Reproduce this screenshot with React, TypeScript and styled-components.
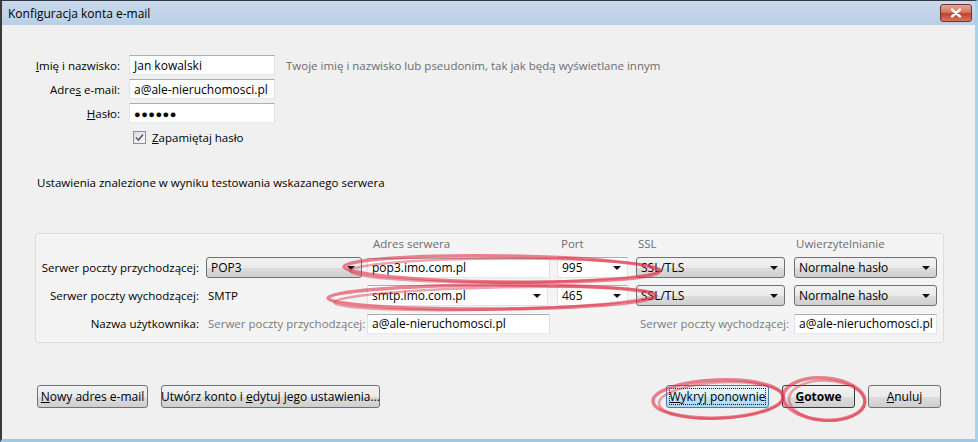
import React from 'react';
import styled, { createGlobalStyle, css } from 'styled-components';

const Global = createGlobalStyle`
  html, body {
    margin: 0;
    padding: 0;
    background: #f0f0f0;
  }
  body {
    font-family: "Open Sans", "Noto Sans", sans-serif;
    font-size: 11.5px;
    color: #000;
  }
`;

const Window = styled.div`
  position: relative;
  width: 978px;
  height: 442px;
  box-sizing: border-box;
  border-top: 1px solid #2f3a46;
  border-left: 2px solid #3a3a3a;
  border-right: 3px solid #a6d3ec;
  border-bottom: 3px solid #9ccbe7;
  background: #f0f0f0;
  display: flex;
  flex-direction: column;
  overflow: hidden;
`;

const TitleBar = styled.div`
  height: 24px;
  flex: none;
  display: flex;
  align-items: center;
  justify-content: space-between;
  padding: 0 3px 0 6px;
  background: linear-gradient(#cad9ec, #b9cfe7);
  font-size: 12px;
`;

const CloseButton = styled.div`
  width: 30px;
  height: 16px;
  border: 1px solid #6b3430;
  border-radius: 3px;
  background: linear-gradient(#e7a595 0%, #d77662 45%, #c2422c 55%, #d9735d 100%);
  display: flex;
  align-items: center;
  justify-content: center;
`;

const Body = styled.div`
  flex: 1;
  display: flex;
  flex-direction: column;
  padding-top: 30px;
`;

const Form = styled.div`
  display: grid;
  grid-template-columns: 118px 146px auto;
  column-gap: 9px;
  row-gap: 4px;
  align-items: center;
`;

const Label = styled.label`
  text-align: right;
  white-space: nowrap;
`;

const inputLook = css`
  box-sizing: border-box;
  height: 20px;
  background: #fff;
  border: 1px solid #e2e3ea;
  border-top-color: #abadb3;
  border-bottom-color: #e3e9ef;
  padding: 0 4px;
  display: flex;
  align-items: center;
  white-space: nowrap;
  overflow: hidden;
  font-size: 12px;
`;

const TextBox = styled.div<{ $w?: number }>`
  ${inputLook};
  width: ${(p) => (p.$w ? `${p.$w}px` : '100%')};
  justify-self: end;
`;

const Dots = styled.span`
  font-size: 11px;
  letter-spacing: 0.5px;
`;

const Hint = styled.span`
  color: #6d6d6d;
  margin-left: 2px;
  white-space: nowrap;
`;

const CheckRow = styled.div`
  grid-column: 2 / 4;
  display: flex;
  align-items: center;
  gap: 6px;
  padding-left: 4px;
  margin-top: 3px;
`;

const CheckBox = styled.span`
  width: 13px;
  height: 13px;
  box-sizing: border-box;
  border: 1px solid #8f8f8f;
  background: linear-gradient(135deg, #dcdcdc, #fbfbfb);
  display: flex;
  align-items: center;
  justify-content: center;
`;

const Note = styled.div`
  margin: 30px 0 0 35px;
  line-height: 16px;
`;

/* tracks include the gap in front of each control; controls sit at the end */
const Panel = styled.div`
  margin: 42px 0 0 33px;
  width: 909px;
  height: 110px;
  box-sizing: border-box;
  border: 1px solid #dcdcdc;
  border-radius: 3px;
  background: #f4f4f4;
  padding-top: 2px;
  display: grid;
  grid-template-columns: 170px 156px 188px 78px 157px 152px;
  grid-template-rows: 14px 21px 21px 21px;
  row-gap: 7px;
  align-items: center;
`;

const Head = styled.span<{ $col: number; $pad: number }>`
  grid-column: ${(p) => p.$col};
  color: #6d6d6d;
  padding-left: ${(p) => p.$pad}px;
  white-space: nowrap;
`;

const RowLabel = styled.span`
  grid-column: 1;
  text-align: right;
  padding-right: 7px;
  white-space: nowrap;
`;

const Muted = styled.span<{ $right?: boolean }>`
  color: #7a7a7a;
  white-space: nowrap;
  text-align: ${(p) => (p.$right ? 'right' : 'left')};
  padding-left: ${(p) => (p.$right ? 0 : 2)}px;
  margin-right: ${(p) => (p.$right ? -4 : 0)}px;
`;

const PlainValue = styled.span`
  padding-left: 2px;
`;

const ComboButton = styled.div<{ $w: number; $flat?: boolean }>`
  box-sizing: border-box;
  width: ${(p) => p.$w}px;
  justify-self: end;
  height: 21px;
  display: flex;
  align-items: center;
  justify-content: space-between;
  padding: 0 6px 0 4px;
  font-size: 12px;
  white-space: nowrap;
  ${(p) =>
    p.$flat
      ? css`
          background: #fff;
          border: 1px solid #e2e3ea;
          border-top-color: #abadb3;
        `
      : css`
          border: 1px solid #707070;
          border-radius: 3px;
          background: linear-gradient(#f2f2f2 0%, #ebebeb 50%, #dddddd 51%, #cfcfcf 100%);
        `}
`;

const Arrow = styled.span`
  width: 0;
  height: 0;
  border-left: 4px solid transparent;
  border-right: 4px solid transparent;
  border-top: 4px solid #111;
`;

const Footer = styled.div`
  margin-top: 42px;
  padding: 0 34px 0 35px;
  display: flex;
  justify-content: space-between;
`;

const ButtonGroup = styled.div<{ $gap: number }>`
  display: flex;
  gap: ${(p) => p.$gap}px;
`;

const Button = styled.div<{ $w: number; $kind?: 'focus' | 'default' }>`
  box-sizing: border-box;
  width: ${(p) => p.$w}px;
  height: 23px;
  border: 1px solid #707070;
  border-radius: 3px;
  background: linear-gradient(#f2f2f2 0%, #ebebeb 50%, #dddddd 51%, #cfcfcf 100%);
  display: flex;
  align-items: center;
  justify-content: center;
  white-space: pre;
  font-size: 12px;
  ${(p) =>
    p.$kind === 'focus' &&
    css`
      border-color: #3c7fb1;
      background: linear-gradient(#eaf6fd 0%, #d9f0fc 50%, #bee6fd 51%, #a7d9f5 100%);
      outline: 1px dotted #222;
      outline-offset: -4px;
    `}
  ${(p) =>
    p.$kind === 'default' &&
    css`
      font-weight: 700;
      border-color: #3a3a3a;
    `}
`;

const Marks = styled.svg`
  position: absolute;
  inset: 0;
  pointer-events: none;
`;

const Ring: React.FC<{ cx: number; cy: number; rx: number; ry: number; r?: number }> = ({ cx, cy, rx, ry, r = 0 }) => (
  <g fill="none" stroke="#dd3148" strokeLinecap="round">
    <ellipse cx={cx} cy={cy} rx={rx} ry={ry} transform={`rotate(${r} ${cx} ${cy})`} strokeWidth={3.5} opacity={0.6} />
    <ellipse cx={cx + 3} cy={cy + 1.5} rx={rx - 3} ry={ry - 1} transform={`rotate(${r - 1} ${cx} ${cy})`} strokeWidth={2.5} opacity={0.45} />
  </g>
);

export default function App() {
  return (
    <>
      <Global />
      <Window>
        <TitleBar>
          <span>Konfiguracja konta e-mail</span>
          <CloseButton>
            <svg width="12" height="10" viewBox="0 0 12 10">
              <path d="M2 1.5 L10 8.5 M10 1.5 L2 8.5" stroke="#fff" strokeWidth="2.4" strokeLinecap="round" />
            </svg>
          </CloseButton>
        </TitleBar>
        <Body>
          <Form>
            <Label>
              <u>I</u>mię i nazwisko:
            </Label>
            <TextBox>Jan kowalski</TextBox>
            <Hint>Twoje imię i nazwisko lub pseudonim, tak jak będą wyświetlane innym</Hint>
            <Label>
              Adre<u>s</u> e-mail:
            </Label>
            <TextBox>a@ale-nieruchomosci.pl</TextBox>
            <span />
            <Label>
              <u>H</u>asło:
            </Label>
            <TextBox>
              <Dots>●●●●●●</Dots>
            </TextBox>
            <span />
            <span />
            <CheckRow>
              <CheckBox>
                <svg width="9" height="9" viewBox="0 0 9 9">
                  <path d="M1 4.5 L3.5 7 L8 1.5" fill="none" stroke="#4a5f7a" strokeWidth="1.6" />
                </svg>
              </CheckBox>
              <span>
                <u>Z</u>apamiętaj hasło
              </span>
            </CheckRow>
          </Form>

          <Note>Ustawienia znalezione w wyniku testowania wskazanego serwera</Note>

          <Panel>
            <span />
            <span />
            <Head $col={3} $pad={11}>Adres serwera</Head>
            <Head $col={4} $pad={11}>Port</Head>
            <Head $col={5} $pad={10}>SSL</Head>
            <Head $col={6} $pad={11}>Uwierzytelnianie</Head>

            <RowLabel>Serwer poczty przychodzącej:</RowLabel>
            <ComboButton $w={156}>
              POP3 <Arrow />
            </ComboButton>
            <TextBox $w={183}>pop3.imo.com.pl</TextBox>
            <ComboButton $w={71} $flat>
              995 <Arrow />
            </ComboButton>
            <ComboButton $w={149}>
              SSL/TLS <Arrow />
            </ComboButton>
            <ComboButton $w={143}>
              Normalne hasło <Arrow />
            </ComboButton>

            <RowLabel>Serwer poczty wychodzącej:</RowLabel>
            <PlainValue>SMTP</PlainValue>
            <ComboButton $w={181} style={{ justifySelf: 'start', marginLeft: 5 }} $flat>
              smtp.imo.com.pl <Arrow />
            </ComboButton>
            <ComboButton $w={71} $flat>
              465 <Arrow />
            </ComboButton>
            <ComboButton $w={149}>
              SSL/TLS <Arrow />
            </ComboButton>
            <ComboButton $w={143}>
              Normalne hasło <Arrow />
            </ComboButton>

            <RowLabel>Nazwa użytkownika:</RowLabel>
            <Muted>Serwer poczty przychodzącej:</Muted>
            <TextBox $w={183}>a@ale-nieruchomosci.pl</TextBox>
            <Muted $right style={{ gridColumn: '4 / 6' }}>
              Serwer poczty wychodzącej:
            </Muted>
            <TextBox $w={143}>a@ale-nieruchomosci.pl</TextBox>
          </Panel>

          <Footer>
            <ButtonGroup $gap={13}>
              <Button $w={111}>
                <u>N</u>owy adres e-mail
              </Button>
              <Button $w={219}>
                {'Utwórz konto i '}
                <u>e</u>
                {'dytuj jego ustawienia...'}
              </Button>
            </ButtonGroup>
            <ButtonGroup $gap={13}>
              <Button $w={103} $kind="focus">
                <u>W</u>ykryj ponownie
              </Button>
              <Button $w={73} $kind="default">
                <u>G</u>otowe
              </Button>
              <Button $w={73}>
                <u>A</u>nuluj
              </Button>
            </ButtonGroup>
          </Footer>
        </Body>

        <Marks width="978" height="442" viewBox="0 0 978 442">
          <Ring cx={500} cy={268} rx={158} ry={13} r={0.8} />
          <Ring cx={490} cy={296} rx={164} ry={12} r={-0.4} />
          <Ring cx={716} cy={398} rx={65} ry={19} r={-2} />
          <Ring cx={822} cy={398} rx={41} ry={21} r={4} />
        </Marks>
      </Window>
    </>
  );
}
